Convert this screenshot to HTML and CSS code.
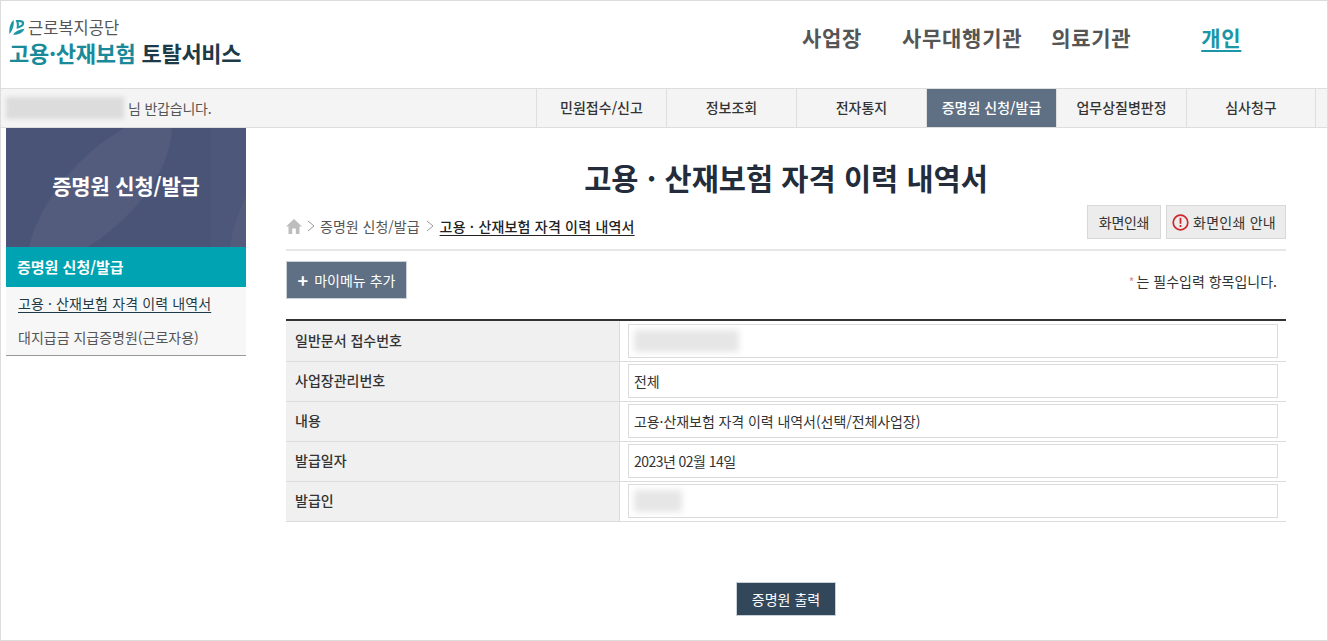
FILE: index.html
```html
<!DOCTYPE html>
<html lang="ko">
<head>
<meta charset="utf-8">
<title>고용·산재보험 토탈서비스</title>
<link rel="stylesheet" href="styles.css">
</head>
<body>
<div class="frame">
  <header class="top">
    <div class="logo">
      <div class="org">
        <svg class="mark" width="16" height="16" viewBox="0 0 16 16"><path fill="#1a96a6" d="M4.500 1 C5.500 5 4 11 0.500 15 C-0.200 10 1 4 4.500 1Z"/><path fill="#1a96a6" fill-rule="evenodd" d="M6.500 1 H11 C15 1 16 4 14.500 6.500 C13 8.500 10.500 9 7.500 9.800 C8.200 6.500 8 3.500 6.500 1Z M9.500 3.300 C10 4.500 10 5.800 9.800 7 C11.500 6.600 12.800 5.800 12.900 4.500 C12.900 3.600 12 3.200 11 3.200Z"/><path fill="#1a96a6" d="M4 15.500 C6 12.500 10 10.500 15.500 9.800 C14.500 13 10 16.500 4 15.500Z"/></svg>
        <span>근로복지공단</span>
      </div>
      <div class="brand"><span class="teal">고용·산재보험</span><span class="dark">토탈서비스</span></div>
    </div>
    <nav class="gnb">
      <a class="g1">사업장</a>
      <a class="g2">사무대행기관</a>
      <a class="g3">의료기관</a>
      <a class="g4">개인</a>
    </nav>
  </header>
  <div class="bar">
    <div class="greet"><span class="blur-name"></span><span>님 반갑습니다.</span></div>
    <ul class="tabs">
      <li>민원접수/신고</li>
      <li>정보조회</li>
      <li>전자통지</li>
      <li class="on">증명원 신청/발급</li>
      <li>업무상질병판정</li>
      <li class="last">심사청구</li>
    </ul>
  </div>
  <div class="body">
    <aside class="side">
      <div class="side-head">
        <svg class="deco" width="240" height="119" viewBox="0 0 240 119"><path fill="#535c7d" d="M166 0 C164 50 120 95 82 119 H23 C35 70 75 25 118 0Z"/><path fill="#4d5779" d="M205 0 H240 V119 H205Z"/><path fill="#535c7d" d="M240 68 C232 85 226 102 224 119 H240Z"/></svg>
        <h2>증명원 신청/발급</h2>
      </div>
      <div class="side-cat">증명원 신청/발급</div>
      <ul class="side-list">
        <li class="cur"><a>고용 · 산재보험 자격 이력 내역서</a></li>
        <li>대지급금 지급증명원(근로자용)</li>
      </ul>
    </aside>
    <main class="main">
      <h1>고용 · 산재보험 자격 이력 내역서</h1>
      <div class="crumbrow">
        <div class="crumbs">
          <svg width="16" height="15" viewBox="0 0 16 15"><path fill="#bdbdbd" d="M8 0 L16 7.500 H13.500 V15 H9.800 V9.500 H6.200 V15 H2.500 V7.500 H0Z"/></svg>
          <svg class="chev" width="8" height="12" viewBox="0 0 8 12"><path fill="none" stroke="#999" d="M1 1 L7 6 L1 11"/></svg>
          <span>증명원 신청/발급</span>
          <svg class="chev" width="8" height="12" viewBox="0 0 8 12"><path fill="none" stroke="#999" d="M1 1 L7 6 L1 11"/></svg>
          <a class="here">고용 · 산재보험 자격 이력 내역서</a>
        </div>
        <div class="prints">
          <button class="gbtn b1">화면인쇄</button>
          <button class="gbtn b2"><svg width="17" height="17" viewBox="0 0 17 17"><circle cx="8.500" cy="8.500" r="7.300" fill="none" stroke="#d0262c" stroke-width="1.700"/><rect x="7.600" y="3.800" width="1.800" height="6" fill="#d0262c"/><rect x="7.600" y="11" width="1.800" height="2" fill="#d0262c"/></svg>화면인쇄 안내</button>
        </div>
      </div>
      <div class="toolrow">
        <button class="mymenu"><b>+</b>마이메뉴 추가</button>
        <p class="req"><i>*</i>는 필수입력 항목입니다.</p>
      </div>
      <div class="form">
        <div class="row"><div class="th">일반문서 접수번호</div><div class="td"><div class="box"><span class="blur b-long"></span></div></div></div>
        <div class="row"><div class="th">사업장관리번호</div><div class="td"><div class="box">전체</div></div></div>
        <div class="row"><div class="th">내용</div><div class="td"><div class="box">고용·산재보험 자격 이력 내역서(선택/전체사업장)</div></div></div>
        <div class="row"><div class="th">발급일자</div><div class="td"><div class="box date">2023년 02월 14일</div></div></div>
        <div class="row"><div class="th">발급인</div><div class="td"><div class="box"><span class="blur b-short"></span></div></div></div>
      </div>
      <div class="actions"><button class="out">증명원 출력</button></div>
    </main>
  </div>
</div>
</body>
</html>
```
FILE: styles.css
```css
* { box-sizing: border-box; }
html, body { margin: 0; padding: 0; height: 641px; overflow: hidden; background: #fff; }
body { font-family: "Noto Sans CJK KR", "Noto Sans", "Liberation Sans", sans-serif; color: #333; font-size: 14px; }
ul { list-style: none; margin: 0; padding: 0; }
button { font-family: inherit; cursor: pointer; }

.frame { width: 1328px; height: 641px; border: 1px solid #dcdcdc; }

.top { height: 87px; display: flex; position: relative; }
.logo { padding: 16px 0 0 8px; width: 793px; }
.org { display: flex; align-items: center; gap: 3px; height: 20px; font-size: 16.500px; line-height: 20px; color: #555; }
.brand { display: flex; gap: 6px; margin: 1px 0 0; font-size: 22px; line-height: 28px; font-weight: 700; letter-spacing: -0.3px; white-space: nowrap; }
.teal { color: #1a8a9a; }
.dark { color: #1c3a48; }

.gnb { display: flex; font-size: 21px; font-weight: 700; color: #555; line-height: 30px; padding-top: 21px; letter-spacing: 0.7px; }
.gnb a { display: block; white-space: nowrap; height: 30px; }
.g1 { margin-left: 8px; }
.g2 { margin-left: 40px; }
.g3 { margin-left: 29px; }
.g4 { margin-left: 70px; color: #1a96a6; text-decoration: underline; text-underline-offset: 4px; }

.bar { height: 40px; display: flex; justify-content: space-between; background: #f4f4f4; border-top: 1px solid #dedede; border-bottom: 1px solid #dedede; }
.greet { display: flex; align-items: center; margin-left: 5px; font-size: 14px; color: #555; letter-spacing: -0.2px; gap: 4px; }
.blur-name { display: block; width: 118px; height: 22px; background: #dcdcdc; filter: blur(2px); }
.tabs { display: flex; margin-right: 11px; }
.tabs li { width: 130px; height: 38px; border-left: 1px solid #dedede; text-align: center; line-height: 37px; font-size: 14px; font-weight: 500; color: #333; }
.tabs li.last { border-right: 1px solid #dedede; }
.tabs li.on { background: #5f7084; color: #fff; }

.body { display: flex; }
.side { width: 240px; margin-left: 5px; }
.side-head { height: 119px; background: #4a5476; position: relative; display: flex; align-items: center; justify-content: center; overflow: hidden; padding-bottom: 5px; }
.deco { position: absolute; left: 0; top: 0; }
.side-head h2 { position: relative; margin: 0; font-size: 21px; line-height: 26px; font-weight: 700; color: #fff; letter-spacing: -0.2px; }
.side-cat { height: 40px; padding-left: 11px; background: #00a3b1; color: #fff; font-size: 15px; font-weight: 700; line-height: 39px; }
.side-list { background: #f7f7f7; border-bottom: 1px solid #999; }
.side-list li { height: 34px; padding-left: 12px; line-height: 32px; font-size: 14px; color: #555; }
.side-list .cur { color: #1c3a48; letter-spacing: 0.12px; }
.side-list .cur a { text-decoration: underline; text-underline-offset: 3px; }

.main { width: 1000px; margin-left: 40px; }
h1 { margin: 29px 0 0; text-align: center; height: 40px; line-height: 40px; font-size: 29.500px; font-weight: 700; color: #222c3a; }
.crumbrow { display: flex; justify-content: space-between; height: 46px; margin-top: 8px; border-bottom: 2px solid #e6e6e6; }
.crumbs { display: flex; align-items: center; height: 30px; margin-top: 6px; font-size: 14px; color: #555; gap: 5px; }
.crumbs span { margin-right: 1px; }
.here { color: #222; font-weight: 500; text-decoration: underline; text-underline-offset: 3px; margin-left: 1px; letter-spacing: 0.2px; }
.prints { display: flex; gap: 5px; height: 34px; }
.gbtn { height: 34px; border: 1px solid #d8d8d8; background: #ececec; color: #333; font-size: 14px; padding: 0; display: flex; align-items: center; justify-content: center; gap: 4px; }
.b1 { width: 74px; letter-spacing: -0.3px; }
.b2 { width: 120px; justify-content: flex-start; padding-left: 5px; letter-spacing: 0.25px; }

.toolrow { display: flex; justify-content: space-between; align-items: center; height: 38px; margin-top: 10px; }
.mymenu { width: 121px; height: 38px; padding: 0; background: #5f7084; border: 1px solid #c9d0d8; color: #fff; font-size: 14px; display: flex; align-items: center; justify-content: center; gap: 6px; }
.mymenu b { font-size: 18px; line-height: 20px; font-weight: 700; }
.req { margin: 0 9px 0 0; font-size: 14px; color: #333; padding-top: 2px; }
.req i { color: #e08a8a; font-style: normal; font-size: 12px; margin-right: 2px; }

.form { margin-top: 20px; border-top: 2px solid #333; }
.row { display: flex; height: 40px; border-bottom: 1px solid #dcdcdc; }
.row:first-child { height: 41px; }
.th { width: 334px; padding-left: 9px; line-height: 37px; background: #f0f0f0; border-right: 1px solid #dcdcdc; font-size: 14px; font-weight: 500; color: #333; }
.row:first-child .th { line-height: 39px; }
.td { flex: 1; padding: 2px 8px 0 8px; }
.row:first-child .td { padding-top: 3px; }
.box { height: 34px; border: 1px solid #dcdcdc; padding-left: 5px; line-height: 32px; font-size: 14px; color: #333; letter-spacing: -0.07px; }
.box.date { letter-spacing: -0.55px; }
.blur { display: block; height: 22px; margin-top: 5px; background: #e6e6e6; filter: blur(3px); }
.b-long { width: 105px; }
.b-short { width: 48px; }

.actions { display: flex; justify-content: center; margin-top: 60px; }
.out { width: 100px; height: 34px; padding: 0; background: #33475b; border: 1px solid #c9d0d8; color: #fff; font-size: 14px; }
```
